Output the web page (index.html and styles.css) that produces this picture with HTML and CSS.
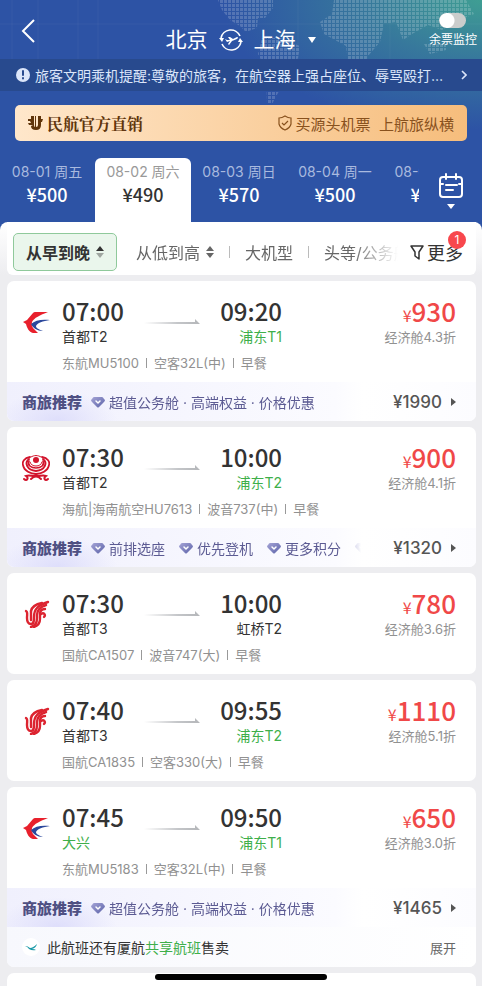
FILE: index.html
```html
<!DOCTYPE html>
<html lang="zh-CN">
<head>
    <meta charset="UTF-8">
    <meta name="viewport" content="width=device-width, initial-scale=1.0">
    <title>北京 - 上海</title>
    <link rel="stylesheet" href="styles.css">
</head>
<body>
    <!-- shared icons -->
    <svg class="sprite" aria-hidden="true">
        <defs>
            <linearGradient id="line-fade" x1="0" x2="1" y1="0" y2="0">
                <stop offset="0" stop-color="#c4c6c9" stop-opacity="0"/>
                <stop offset="0.6" stop-color="#c4c6c9"/>
                <stop offset="1" stop-color="#b4b6b9"/>
            </linearGradient>
            <linearGradient id="gem-fill" x1="0" x2="1" y1="0" y2="1">
                <stop offset="0" stop-color="#a5a4d6"/>
                <stop offset="1" stop-color="#5b62a8"/>
            </linearGradient>
        </defs>
        <symbol id="eastern" viewBox="0 0 28 28">
            <path fill="#e8202c" d="M26 4H13Q12 4 11 5L5 12L1 14L4 16C5 20 7 24 11 25H16L11 20Q9 17 10 14C12 10 18 7 26 4Z"/>
            <path fill="#2b489c" d="M28 12C20 11 13 12 9 16C11 20 15 23 21 23C16 21 14 20 14 18C15 15 21 13 28 12Z"/>
        </symbol>
        <symbol id="hainan" viewBox="0 0 28 28">
            <g fill="none" stroke="#d2142c" stroke-linecap="round">
                <path stroke-width="1.8" d="M8 3C2 4 0 8 1 11C2 17 9 20 14 20C19 20 26 17 27 11C28 8 26 4 20 3"/>
                <path stroke-width="2" d="M7 5C2 9 5 16 14 17C23 16 26 9 21 5"/>
                <path stroke-width="1.6" d="M7 7C5 11 9 14 14 14C19 14 23 11 21 7"/>
                <path stroke-width="1" d="M8 8C9 11 11 12 14 12C17 12 19 11 20 8"/>
                <path stroke-width="1" d="M9 3C12 1 16 1 19 3"/>
                <path stroke-width="2" d="M2 25C5 28 7 24 4 22C9 20 11 24 14 21C17 24 19 20 24 22C21 24 23 28 26 25"/>
                <path stroke-width="2" d="M9 25Q14 20 19 25"/>
            </g>
            <circle cx="14" cy="6" r="3" fill="#d2142c"/>
        </symbol>
        <symbol id="airchina" viewBox="0 0 28 28">
            <g fill="none" stroke="#dc2430" stroke-width="2.4" stroke-linecap="round">
                <path d="M4 11C6 12 5 14 5 18C5 22 6 24 9 24C12 24 12 21 12 17C12 8 17 5 26 2"/>
                <path d="M9 11V20"/>
                <path d="M24 5C18 7 15 10 15 15V18C15 23 13 26 9 27"/>
                <path d="M23 9C20 9 18 11 18 14V19C18 24 15 26 12 27"/>
                <path d="M9 11C10 6 15 4 20 3"/>
                <path d="M19 14C22 12 24 15 22 17"/>
            </g>
        </symbol>
        <symbol id="gem" viewBox="0 0 14 12">
            <path fill="url(#gem-fill)" d="M3 1H11Q12 1 13 3L14 4Q14 5 13 6L8 11Q7 12 6 11L1 6Q0 5 0 4L1 3Q2 1 3 1Z"/>
            <path fill="none" stroke="#fff" stroke-width="1.5" stroke-linecap="round" stroke-linejoin="round" d="M5 5L7 7L9 5"/>
        </symbol>
        <symbol id="arrow" viewBox="0 0 56 6">
            <path fill="url(#line-fade)" d="M0 3H51V0L56 5H0Z"/>
        </symbol>
        <symbol id="sort" viewBox="0 0 8 14">
            <path d="M4 1L8 6H0Z"/>
            <path d="M4 13L0 8H8Z"/>
        </symbol>
        <symbol id="sort-asc" viewBox="0 0 8 14">
            <path d="M4 1L8 6H0Z"/>
            <path opacity="0.4" d="M4 13L0 8H8Z"/>
        </symbol>
    </svg>

    <div class="app">
        <header class="top">
            <svg class="map" viewBox="0 0 482 160" preserveAspectRatio="xMaxYMin slice" aria-hidden="true">
                <defs>
                    <pattern id="dots" width="4" height="4" patternUnits="userSpaceOnUse">
                        <rect width="3" height="3" fill="#fff"/>
                    </pattern>
                </defs>
                <g fill="url(#dots)" opacity="0.18">
                    <path d="M218 0H273V8L265 18H258L257 28L246 32L240 26L230 20L222 10Z"/>
                    <path d="M262 38H280L300 46L298 58L285 80L272 104H267L266 70L258 54Z"/>
                    <path d="M334 0H440L466 0L474 14L455 22L442 30L428 25L412 34L403 40L396 22L384 24L380 42L368 56L360 74L349 70L346 46L324 34L320 22L332 14Z"/>
                    <path d="M424 44H446V50L430 54Z"/>
                </g>
                <path fill="none" stroke="#fff" stroke-opacity="0.04" d="M12 0V59M38 0V59M78 0V59M98 0V59M298 0V59M390 0V59M0 24H482"/>
            </svg>

            <div class="nav">
                <button class="back" aria-label="返回">
                    <svg width="14" height="24" viewBox="0 0 14 24"><path d="M13 1L2 12L13 23"/></svg>
                </button>
                <h1 class="route-title">
                    <span>北京</span>
                    <svg width="24" height="24" viewBox="0 0 24 24" fill="none" stroke="#fff" stroke-width="1.6">
                        <path d="M2 10A10 10 0 0 1 21 8M22 14A10 10 0 0 1 3 16"/>
                        <path fill="#fff" stroke="none" d="M0 10H5L3 14ZM24 14H19L21 10ZM6 11L8 12L11 12L9 9L11 9L14 11L18 9Q20 9 18 11L13 13L10 17L9 16L11 13L8 14Z"/>
                    </svg>
                    <span>上海</span>
                    <svg width="10" height="8" viewBox="0 0 10 8"><path fill="#fff" d="M1 1H9L5 7Z"/></svg>
                </h1>
                <label class="monitor">
                    <input type="checkbox" class="switch">
                    <span>余票监控</span>
                </label>
            </div>

            <a href="#" class="notice">
                <svg width="14" height="14" viewBox="0 0 14 14"><circle cx="7" cy="7" r="7" fill="#dce6fa"/><path stroke="#284a8e" stroke-width="2" stroke-linecap="round" d="M7 3V7M7 10V10.5"/></svg>
                <span class="notice-text">旅客文明乘机提醒:尊敬的旅客，在航空器上强占座位、辱骂殴打他人属于违法行为</span>
                <svg width="6" height="10" viewBox="0 0 6 10"><path fill="none" stroke="#dce6fa" stroke-width="1.6" d="M1 1L5 5L1 9"/></svg>
            </a>

            <a href="#" class="banner">
                <svg width="15" height="14" viewBox="0 0 15 14"><path fill="#60350b" d="M3 0H6V9Q6 11 7 11V0H8V11Q10 11 10 9V0H13V3H15L14 6H13V9Q13 14 8 14Q3 14 3 10L5 9H1L0 7H3L2 5H0V3H3Z"/></svg>
                <strong class="banner-title">民航官方直销</strong>
                <svg width="14" height="16" viewBox="0 0 14 16" fill="none" stroke="#88511d" stroke-width="1.2"><path d="M7 1Q10 3 13 3V9Q12 13 7 15Q2 13 1 9V3Q4 3 7 1ZM4 8L6 10L10 6"/></svg>
                <span class="banner-slogan">买源头机票&nbsp; 上航旅纵横</span>
            </a>

            <div class="dates">
                <div class="date-list">
                    <button class="date"><span>08-01 周五</span><b>¥500</b></button>
                    <button class="date active"><span>08-02 周六</span><b>¥490</b></button>
                    <button class="date"><span>08-03 周日</span><b>¥570</b></button>
                    <button class="date"><span>08-04 周一</span><b>¥500</b></button>
                    <button class="date"><span>08-05 周二</span><b>¥500</b></button>
                </div>
                <button class="calendar" aria-label="日历">
                    <svg width="24" height="38" viewBox="0 0 24 38" fill="none" stroke="#fff" stroke-width="2" stroke-linecap="round">
                        <rect x="1" y="4" width="22" height="20" rx="3"/>
                        <path d="M7 1V6M17 1V6M2 11H4M20 11H22M7 12H18M7 17H14"/>
                        <path fill="#fff" stroke="none" d="M8 31H16L12 36Z"/>
                    </svg>
                </button>
            </div>
        </header>

        <div class="filter-wrap">
            <div class="filters">
                <div class="filter-list">
                    <button class="filter selected">从早到晚<svg class="sort" width="8" height="14"><use href="#sort-asc"/></svg></button>
                    <button class="filter">从低到高<svg class="sort" width="8" height="14"><use href="#sort"/></svg></button>
                    <i class="divider"></i>
                    <button class="filter">大机型</button>
                    <i class="divider"></i>
                    <button class="filter">头等/公务舱</button>
                </div>
                <button class="more">
                    <svg width="14" height="15" viewBox="0 0 14 15"><path fill="none" stroke="#333" stroke-width="1.5" stroke-linejoin="round" d="M1 1H13L9 7V14L5 11V7Z"/></svg>
                    更多
                    <span class="badge">1</span>
                </button>
            </div>
        </div>

        <main class="flights">
            <article class="card">
                <div class="flight">
                    <svg class="logo" width="28" height="28"><use href="#eastern"/></svg>
                    <div class="route">
                        <span class="time">07:00</span>
                        <svg class="arrow" width="56" height="6"><use href="#arrow"/></svg>
                        <span class="time">09:20</span>
                        <span class="place">首都T2</span>
                        <span class="place to green">浦东T1</span>
                    </div>
                    <div class="fare">
                        <div class="price"><small>¥</small>930</div>
                        <div class="cabin">经济舱4.3折</div>
                    </div>
                    <div class="meta"><span>东航MU5100</span><span>空客32L(中)</span><span>早餐</span></div>
                </div>
                <div class="promo">
                    <strong class="promo-title">商旅推荐</strong>
                    <div class="perks">
                        <span class="perk"><svg width="14" height="12"><use href="#gem"/></svg>超值公务舱 · 高端权益 · 价格优惠</span>
                    </div>
                    <a href="#" class="promo-price">¥1990</a>
                </div>
            </article>

            <article class="card">
                <div class="flight">
                    <svg class="logo" width="28" height="28"><use href="#hainan"/></svg>
                    <div class="route">
                        <span class="time">07:30</span>
                        <svg class="arrow" width="56" height="6"><use href="#arrow"/></svg>
                        <span class="time">10:00</span>
                        <span class="place">首都T2</span>
                        <span class="place to green">浦东T2</span>
                    </div>
                    <div class="fare">
                        <div class="price"><small>¥</small>900</div>
                        <div class="cabin">经济舱4.1折</div>
                    </div>
                    <div class="meta"><span>海航|海南航空HU7613</span><span>波音737(中)</span><span>早餐</span></div>
                </div>
                <div class="promo">
                    <strong class="promo-title">商旅推荐</strong>
                    <div class="perks">
                        <span class="perk"><svg width="14" height="12"><use href="#gem"/></svg>前排选座</span>
                        <span class="perk"><svg width="14" height="12"><use href="#gem"/></svg>优先登机</span>
                        <span class="perk"><svg width="14" height="12"><use href="#gem"/></svg>更多积分</span>
                        <span class="perk"><svg width="14" height="12"><use href="#gem"/></svg></span>
                    </div>
                    <a href="#" class="promo-price">¥1320</a>
                </div>
            </article>

            <article class="card">
                <div class="flight">
                    <svg class="logo" width="28" height="28"><use href="#airchina"/></svg>
                    <div class="route">
                        <span class="time">07:30</span>
                        <svg class="arrow" width="56" height="6"><use href="#arrow"/></svg>
                        <span class="time">10:00</span>
                        <span class="place">首都T3</span>
                        <span class="place to">虹桥T2</span>
                    </div>
                    <div class="fare">
                        <div class="price"><small>¥</small>780</div>
                        <div class="cabin">经济舱3.6折</div>
                    </div>
                    <div class="meta"><span>国航CA1507</span><span>波音747(大)</span><span>早餐</span></div>
                </div>
            </article>

            <article class="card">
                <div class="flight">
                    <svg class="logo" width="28" height="28"><use href="#airchina"/></svg>
                    <div class="route">
                        <span class="time">07:40</span>
                        <svg class="arrow" width="56" height="6"><use href="#arrow"/></svg>
                        <span class="time">09:55</span>
                        <span class="place">首都T3</span>
                        <span class="place to green">浦东T2</span>
                    </div>
                    <div class="fare">
                        <div class="price"><small>¥</small>1110</div>
                        <div class="cabin">经济舱5.1折</div>
                    </div>
                    <div class="meta"><span>国航CA1835</span><span>空客330(大)</span><span>早餐</span></div>
                </div>
            </article>

            <article class="card">
                <div class="flight">
                    <svg class="logo" width="28" height="28"><use href="#eastern"/></svg>
                    <div class="route">
                        <span class="time">07:45</span>
                        <svg class="arrow" width="56" height="6"><use href="#arrow"/></svg>
                        <span class="time">09:50</span>
                        <span class="place green">大兴</span>
                        <span class="place to green">浦东T1</span>
                    </div>
                    <div class="fare">
                        <div class="price"><small>¥</small>650</div>
                        <div class="cabin">经济舱3.0折</div>
                    </div>
                    <div class="meta"><span>东航MU5183</span><span>空客32L(中)</span><span>早餐</span></div>
                </div>
                <div class="promo">
                    <strong class="promo-title">商旅推荐</strong>
                    <div class="perks">
                        <span class="perk"><svg width="14" height="12"><use href="#gem"/></svg>超值公务舱 · 高端权益 · 价格优惠</span>
                    </div>
                    <a href="#" class="promo-price">¥1465</a>
                </div>
                <div class="share">
                    <svg width="18" height="18" viewBox="0 0 18 18"><circle cx="9" cy="9" r="9" fill="#fff"/><path fill="#1b9aa8" d="M3 8Q6 8 8 10Q11 10 15 6Q14 10 10 11Q13 11 14 12Q10 13 7 11Q6 9 3 8Z"/></svg>
                    <span>此航班还有厦航<em>共享航班</em>售卖</span>
                    <button class="expand">展开</button>
                </div>
            </article>

            <article class="card next"></article>
        </main>
    </div>
    <div class="home-bar"></div>
</body>
</html>
```
FILE: styles.css
```css
* {
    box-sizing: border-box;
}
body {
    margin: 0;
    background: #ededf0;
    color: #333;
    font-family: Inter, "Noto Sans CJK SC", sans-serif;
    font-size: 14px;
}
button {
    padding: 0;
    border: none;
    background: none;
    color: inherit;
    font: inherit;
    cursor: pointer;
}
a {
    color: inherit;
    text-decoration: none;
}
svg {
    flex: none;
    display: block;
}
.sprite {
    position: absolute;
    width: 0;
    height: 0;
}
.app {
    display: flex;
    flex-direction: column;
    min-height: 100vh;
}

/* header */
.top {
    position: relative;
    padding-bottom: 8px;
    margin-bottom: -8px;
    color: #fff;
    background: radial-gradient(ellipse 260px 130px at 100% 0, #3f9e93, #37789c 45%, rgba(45, 83, 165, 0)) #2d53a5;
}
.map {
    position: absolute;
    top: 0;
    left: 0;
    width: 100%;
    height: 160px;
}
.nav, .notice, .banner, .dates {
    position: relative;
}
.nav {
    display: grid;
    grid-template-columns: 1fr auto 1fr;
    height: 59px;
    padding: 0 5px;
}
.back {
    justify-self: start;
    padding: 3px 16px 0;
}
.back path {
    fill: none;
    stroke: #fff;
    stroke-width: 2;
}
.route-title {
    display: flex;
    align-items: center;
    gap: 11px;
    margin: 0;
    padding-top: 20px;
    font-size: 21px;
    line-height: 32px;
    font-weight: 400;
}
.monitor {
    display: flex;
    flex-direction: column;
    align-items: center;
    justify-self: end;
    gap: 3px;
    padding-top: 13px;
    font-size: 12px;
    line-height: 18px;
}
.switch {
    appearance: none;
    width: 27px;
    height: 15px;
    margin: 0;
    border-radius: 8px;
    background: radial-gradient(circle at 8px 50%, #fff 7px, #cbcdcc 8px);
}
.switch:checked {
    background: radial-gradient(circle at 19px 50%, #fff 7px, #3eaf4a 8px);
}
.notice {
    display: flex;
    align-items: center;
    gap: 5px;
    height: 32px;
    padding: 0 15px 0 16px;
    background: #284a8e;
    color: #dce6fa;
}
.notice-text {
    flex: 1;
    margin-right: 12px;
    overflow: hidden;
    white-space: nowrap;
    text-overflow: ellipsis;
}
.banner {
    display: flex;
    align-items: center;
    gap: 4px;
    height: 36px;
    margin: 14px 15px 17px;
    padding: 0 13px;
    border-radius: 5px;
    background: linear-gradient(90deg, #ffe7cb, #f6bd7c);
    color: #88511d;
    font-size: 15px;
}
.banner-title {
    margin-right: auto;
    color: #60350b;
    font-family: "Noto Serif CJK SC", "Noto Sans CJK SC", serif;
    font-size: 16px;
}

/* dates */
.dates {
    display: flex;
    height: 64px;
}
.date-list {
    display: flex;
    flex: 1;
    min-width: 0;
    margin-left: -1px;
    overflow: hidden;
}
.date {
    display: flex;
    flex: none;
    flex-direction: column;
    align-items: center;
    width: 96px;
    padding-top: 4px;
    border-radius: 6px 6px 0 0;
}
.date span {
    color: #a9badf;
    line-height: 20px;
}
.date b {
    font-family: "Noto Sans CJK SC", sans-serif;
    font-size: 18px;
    font-weight: 500;
    line-height: 24px;
}
.date.active {
    background: #fff;
    color: #333;
}
.date.active span {
    color: #999;
}
.calendar {
    display: flex;
    justify-content: center;
    width: 63px;
    padding-top: 15px;
}

/* filters */
.filter-wrap {
    position: relative;
    padding: 0 6px 0 7px;
    border-radius: 8px 8px 0 0;
    background: linear-gradient(#fff, #ededf0);
}
.filters {
    display: flex;
    align-items: center;
    height: 53px;
    padding: 11px 13px 4px 6px;
    border-radius: 0 0 6px 6px;
    background: #fff;
}
.filter-list {
    display: flex;
    flex: 1;
    align-items: center;
    min-width: 0;
    overflow: hidden;
    white-space: nowrap;
    mask-image: linear-gradient(90deg, #000 88%, transparent);
}
.filter {
    display: flex;
    flex: none;
    align-items: center;
    gap: 6px;
    height: 38px;
    color: #666;
    font-size: 16px;
}
.filter.selected {
    margin-right: 19px;
    padding: 0 12px;
    border: 1px solid #8fc99b;
    border-radius: 5px;
    background: #eaf6ec;
    color: #333;
    font-weight: 700;
}
.sort {
    fill: #666;
}
.selected .sort {
    fill: #333;
}
.divider {
    flex: none;
    width: 1px;
    height: 12px;
    margin: 0 15px;
    background: #bbb;
}
.more {
    position: relative;
    display: flex;
    align-items: center;
    gap: 3px;
    margin-left: 12px;
    font-size: 18px;
}
.badge {
    position: absolute;
    top: -8px;
    right: -3px;
    width: 18px;
    border-radius: 9px;
    background: #f8474d;
    color: #fff;
    font-size: 12px;
    line-height: 18px;
}

/* flight cards */
.flights {
    display: flex;
    flex: 1;
    flex-direction: column;
    gap: 6px;
    padding: 6px 6px 0 7px;
}
.card {
    overflow: hidden;
    border-radius: 7px;
    background: #fff;
}
.card.next {
    flex: 1;
    border-radius: 7px 7px 0 0;
}
.flight {
    display: grid;
    grid-template-columns: 40px 220px 1fr;
    padding: 16px 20px 10px 15px;
}
.logo {
    margin-top: 11px;
}
.route {
    display: grid;
    grid-template-columns: auto 1fr auto;
    grid-template-rows: 28px 24px;
}
.time {
    font-family: "Noto Sans CJK SC", sans-serif;
    font-size: 24px;
    font-weight: 500;
    line-height: 28px;
}
.arrow {
    align-self: end;
    justify-self: center;
}
.place {
    line-height: 24px;
}
.place.to {
    grid-column: 2 / 4;
    text-align: right;
}
.green {
    color: #3eaf4a;
}
.fare {
    text-align: right;
}
.price {
    height: 28px;
    color: #f04848;
    font-family: "Noto Sans CJK SC", sans-serif;
    font-size: 26px;
    font-weight: 500;
    line-height: 28px;
}
.price small {
    font-size: 16px;
    font-weight: 400;
    line-height: 16px;
}
.cabin, .meta {
    color: #919191;
    font-size: 13px;
}
.cabin {
    line-height: 24px;
}
.meta {
    display: flex;
    grid-column: 2 / 4;
    align-items: center;
    padding-top: 5px;
    line-height: 18px;
}
.meta span + span {
    display: flex;
    align-items: center;
}
.meta span + span::before {
    content: "";
    width: 1px;
    height: 10px;
    margin: 0 7px;
    background: #999;
}

/* business offer */
.promo {
    display: flex;
    align-items: center;
    height: 39px;
    padding: 0 20px 0 15px;
    background: radial-gradient(ellipse 60px 30px at 50px 100%, #dedefb, rgba(222, 222, 251, 0)), linear-gradient(90deg, #f0f0fd, #fbfbff 70%, #fff 76%, #fcfcff);
}
.promo-title {
    color: #4f5083;
    font-size: 15px;
    font-weight: 900;
}
.perks {
    display: flex;
    flex: 1;
    gap: 14px;
    min-width: 0;
    margin-left: 9px;
    overflow: hidden;
    color: #5c5b93;
    white-space: nowrap;
    mask-image: linear-gradient(90deg, #000 93%, transparent);
}
.perk {
    display: flex;
    align-items: center;
    gap: 4px;
}
.promo-price {
    display: flex;
    align-items: center;
    justify-content: flex-end;
    gap: 9px;
    width: 95px;
    color: #555;
    font-size: 17px;
    font-weight: 500;
}
.promo-price::after {
    content: "";
    border: 4px solid transparent;
    border-left: 5px solid #555;
    border-right: none;
}
.share {
    display: flex;
    align-items: center;
    gap: 7px;
    height: 40px;
    padding: 0 20px 0 15px;
    background: linear-gradient(90deg, #f7f8fd, #fff);
}
.share em {
    color: #3eaf4a;
    font-style: normal;
}
.expand {
    margin-left: auto;
    color: #666;
    font-size: 13px;
}

.home-bar {
    position: fixed;
    bottom: 6px;
    left: 50%;
    width: 172px;
    height: 6px;
    margin-left: -86px;
    border-radius: 3px;
    background: #000;
}
```
